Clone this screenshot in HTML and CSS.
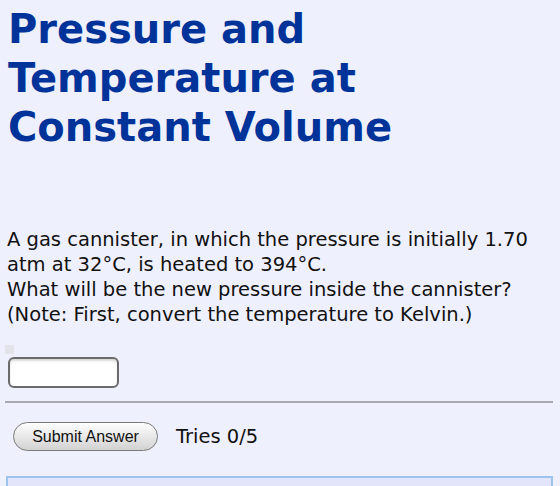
FILE: index.html
```html
<!DOCTYPE html>
<html lang="en">
<head>
  <meta charset="UTF-8">
  <meta name="viewport" content="width=device-width, initial-scale=1.0">
  <title>Pressure and Temperature at Constant Volume</title>
  <link rel="stylesheet" href="styles.css">
</head>
<body>
  <h1 class="title">Pressure and Temperature at Constant Volume</h1>

  <p class="question">
    A gas cannister, in which the pressure is initially 1.70 atm at 32°C, is heated to 394°C.<br>
    What will be the new pressure inside the cannister?<br>
    (Note: First, convert the temperature to Kelvin.)
  </p>

  <div class="answer-area">
    <span class="marker"></span>
    <input type="text" class="answer-input" autocomplete="off">
  </div>

  <hr class="divider">

  <div class="submit-row">
    <button class="submit-btn">Submit Answer</button>
    <span class="tries">Tries 0/5</span>
  </div>

  <div class="feedback"></div>
</body>
</html>
```

FILE: styles.css
```css
body {
  font-family: "DejaVu Sans", Verdana, sans-serif;
  color: #111;
  background-color: #eff0fd;
  margin: 0;
  padding: 5px 7px 0 8px;
}

.title {
  font-size: 40px;
  line-height: 49px;
  font-weight: bold;
  color: #003399;
  margin: 0 0 75px 0;
}

.question {
  font-size: 19.5px;
  line-height: 25px;
  margin: 0;
  margin-left: -1px;
}

.answer-area {
  margin-top: 18px;
}

.marker {
  display: block;
  width: 9px;
  height: 9px;
  margin-left: -3px;
  background-color: #e3e3ea;
}

.answer-input {
  display: block;
  box-sizing: border-box;
  width: 111px;
  height: 31px;
  margin-top: 3px;
  border: 2px solid #6b6b6b;
  border-radius: 6px;
  background-color: #fff;
  box-shadow: inset 0 2px 2px rgba(0,0,0,0.15);
  outline: none;
}

.divider {
  margin: 13px 0 0 -3px;
  border: none;
  height: 2px;
  background-color: #a9a9b0;
}

.submit-row {
  display: flex;
  align-items: center;
  gap: 18px;
  margin-top: 19px;
  padding-left: 5px;
}

.submit-btn {
  box-sizing: border-box;
  width: 145px;
  height: 29px;
  font-family: "Liberation Sans", Arial, sans-serif;
  font-size: 16px;
  color: #111;
  border: 1px solid #7a7a7a;
  border-radius: 15px;
  background: linear-gradient(#fefefe, #e6e6e6 55%, #d2d2d2);
  padding: 0;
}

.tries {
  font-size: 19.5px;
  color: #111;
}

.feedback {
  margin: 25px 0 0 -2px;
  height: 40px;
  border: 2px solid #9cc4ee;
  background-color: #e3e5fa;
}
```
